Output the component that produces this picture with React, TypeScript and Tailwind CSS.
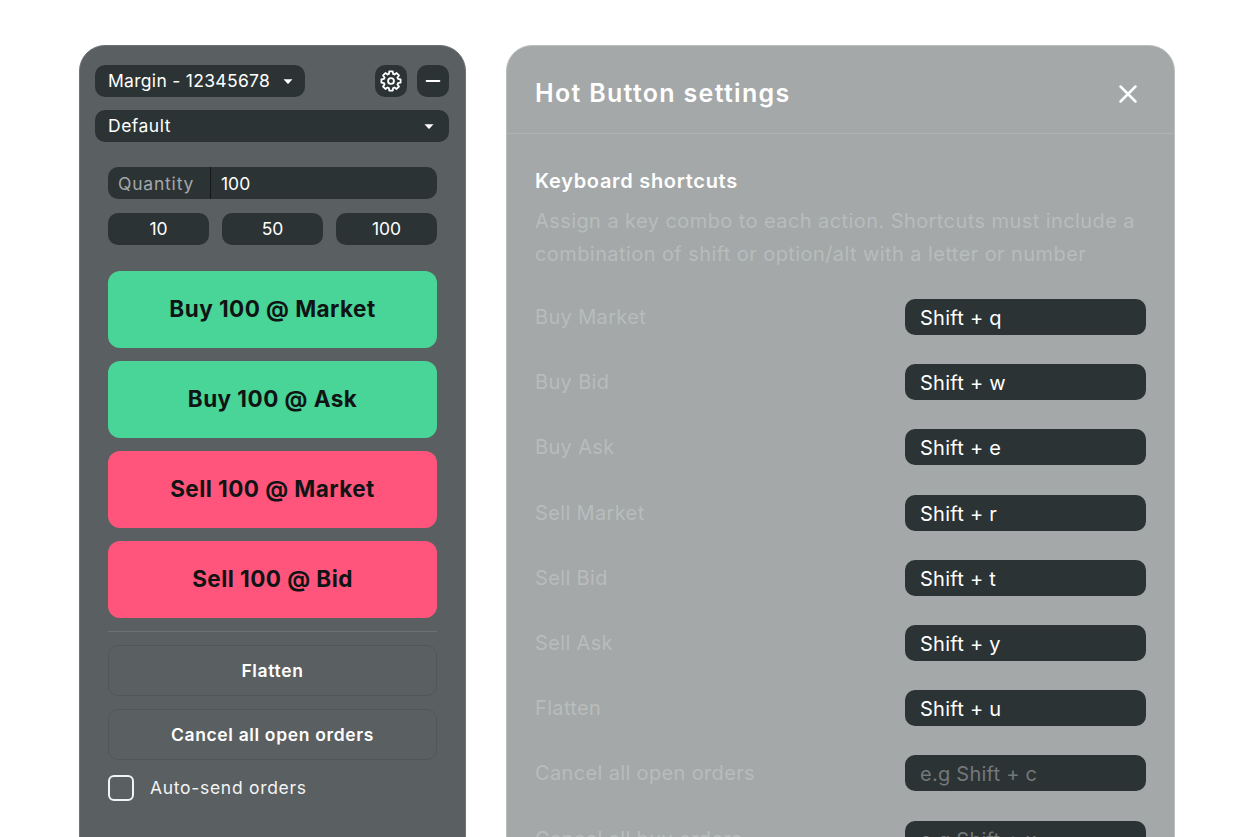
import React from "react";
import { Minus, X } from "lucide-react";

const shortcuts = [
  { label: "Buy Market", value: "Shift + q" },
  { label: "Buy Bid", value: "Shift + w" },
  { label: "Buy Ask", value: "Shift + e" },
  { label: "Sell Market", value: "Shift + r" },
  { label: "Sell Bid", value: "Shift + t" },
  { label: "Sell Ask", value: "Shift + y" },
  { label: "Flatten", value: "Shift + u" },
  { label: "Cancel all open orders", value: "", hint: "e.g Shift + c" },
  { label: "Cancel all buy orders", value: "", hint: "e.g Shift + x" },
];

// eight squared-off teeth, walked round the centre of a 24 box
const gearPath = Array.from({ length: 8 }, (_, k) => {
  const pt = (deg: number, r: number) => {
    const a = ((k * 45 + deg - 90) * Math.PI) / 180;
    return `${(12 + r * Math.cos(a)).toFixed(2)} ${(12 + r * Math.sin(a)).toFixed(2)}`;
  };
  return `${k === 0 ? "M" : "L"}${pt(-17, 8)}L${pt(-10, 10.6)}L${pt(10, 10.6)}L${pt(17, 8)}`;
}).join("") + "Z";

const Gear = () => (
  <svg width="22" height="22" viewBox="0 0 24 24" fill="none" stroke="#ffffff" strokeWidth="2" strokeLinejoin="round">
    <path d={gearPath} />
    <circle cx="12" cy="12" r="3.2" />
  </svg>
);

const Caret = () => (
  <svg width="10" height="5" viewBox="0 0 10 5" className="shrink-0">
    <path d="M0.5 0.2h9L5.6 4.4a.8.8 0 0 1-1.2 0z" fill="#ffffff" />
  </svg>
);

const HotButton = ({ label, color }: { label: string; color: string }) => (
  <button className={`h-[77px] w-full rounded-[12px] pb-[2px] text-[22.5px] font-bold tracking-[0.45px] text-[#101414] ${color}`}>
    {label}
  </button>
);

const OutlineButton = ({ label }: { label: string }) => (
  <button className="h-[51px] w-full rounded-[10px] border border-[#50565a] pt-[2px] text-[17.5px] font-semibold tracking-[0.65px] text-white">
    {label}
  </button>
);

export default function App() {
  return (
    <div className="flex h-[837px] items-start gap-[40px] overflow-hidden bg-white pl-[79px] pt-[45px] font-['Inter',sans-serif]">
      {/* Order panel */}
      <div className="h-[900px] w-[387px] shrink-0 rounded-[26px] border border-[#6e7274] bg-[#5a5f61] px-[15px] pt-[19px]">
        <div className="flex items-center justify-between pr-px">
          <button className="flex h-[32px] w-[210px] items-center justify-between rounded-[10px] bg-[#2c3335] pl-[13px] pr-[12px] text-[17.5px] tracking-[0.3px] text-white">
            <span>Margin - 12345678</span>
            <Caret />
          </button>
          <div className="flex gap-[10px]">
            <button className="flex h-[32px] w-[32px] items-center justify-center rounded-[10px] bg-[#2c3335] text-white">
              <Gear />
            </button>
            <button className="flex h-[32px] w-[32px] items-center justify-center rounded-[10px] bg-[#2c3335] text-white">
              <Minus size={22} strokeWidth={2} />
            </button>
          </div>
        </div>
        <button className="mt-[13px] flex h-[32px] w-[354px] items-center justify-between rounded-[10px] bg-[#2c3335] pl-[13px] pr-[15px] text-[17.5px] tracking-[0.5px] text-white">
          <span>Default</span>
          <Caret />
        </button>

        <div className="mx-[13px] mt-[25px] w-[329px]">
          <div className="flex h-[32px] items-center overflow-hidden rounded-[10px] bg-[#2c3335] text-[17.5px]">
            <span className="flex h-full w-[103px] items-center border-r border-[#12181a] pl-[10px] pt-[2px] tracking-[0.8px] text-[#a4a8a8]">Quantity</span>
            <span className="pl-[10px] pt-[2px] text-white">100</span>
          </div>
          <div className="mt-[14px] grid grid-cols-3 gap-[13px]">
            {["10", "50", "100"].map((q) => (
              <button key={q} className="h-[32px] rounded-[10px] bg-[#2c3335] text-[17.5px] text-white">
                {q}
              </button>
            ))}
          </div>
          <div className="mt-[26px] flex flex-col gap-[13px]">
            <HotButton label="Buy 100 @ Market" color="bg-[#48d597]" />
            <HotButton label="Buy 100 @ Ask" color="bg-[#48d597]" />
            <HotButton label="Sell 100 @ Market" color="bg-[#ff557c]" />
            <HotButton label="Sell 100 @ Bid" color="bg-[#ff557c]" />
          </div>
          <div className="mt-[13px] border-t border-[#6c7173]" />
          <div className="mt-[13px] flex flex-col gap-[13px]">
            <OutlineButton label="Flatten" />
            <OutlineButton label="Cancel all open orders" />
          </div>
          <label className="mt-[15px] flex items-center gap-[16px]">
            <span className="h-[26px] w-[26px] rounded-[6px] border-2 border-[#f2f3f3]" />
            <span className="text-[17.5px] tracking-[0.7px] text-[#f2f3f3]">Auto-send orders</span>
          </label>
        </div>
      </div>

      {/* Settings modal */}
      <div className="h-[900px] w-[669px] shrink-0 rounded-[26px] border border-[#bcbfbf] bg-[#a4a8a8]">
        <div className="flex h-[88px] items-center justify-between border-b border-[#afb3b3] pl-[28px] pr-[31px] pt-[8px]">
          <h2 className="text-[25px] font-semibold tracking-[1.3px] text-white">Hot Button settings</h2>
          <X size={30} strokeWidth={2} className="text-white" />
        </div>
        <div className="pl-[28px] pr-[28px] pt-[34px]">
          <h3 className="text-[20px] font-semibold leading-[26px] tracking-[0.7px] text-white">Keyboard shortcuts</h3>
          <p className="mt-[11px] text-[20px] leading-[33px] tracking-[0.42px] text-[#b8bcbc]">
            Assign a key combo to each action. Shortcuts must include a combination of shift or option/alt with a letter or number
          </p>
          <div className="mt-[28px] flex flex-col gap-[29.2px]">
            {shortcuts.map((s) => (
              <div key={s.label} className="flex items-center justify-between">
                <span className="text-[20px] tracking-[0.35px] text-[#b8bcbc]">{s.label}</span>
                <div className="flex h-[36px] w-[241px] items-center rounded-[10px] bg-[#2c3335] pl-[15px] pt-[2px] text-[20px] tracking-[0.25px]">
                  {s.value ? <span className="text-white">{s.value}</span> : <span className="text-[#737879]">{s.hint}</span>}
                </div>
              </div>
            ))}
          </div>
        </div>
      </div>
    </div>
  );
}
